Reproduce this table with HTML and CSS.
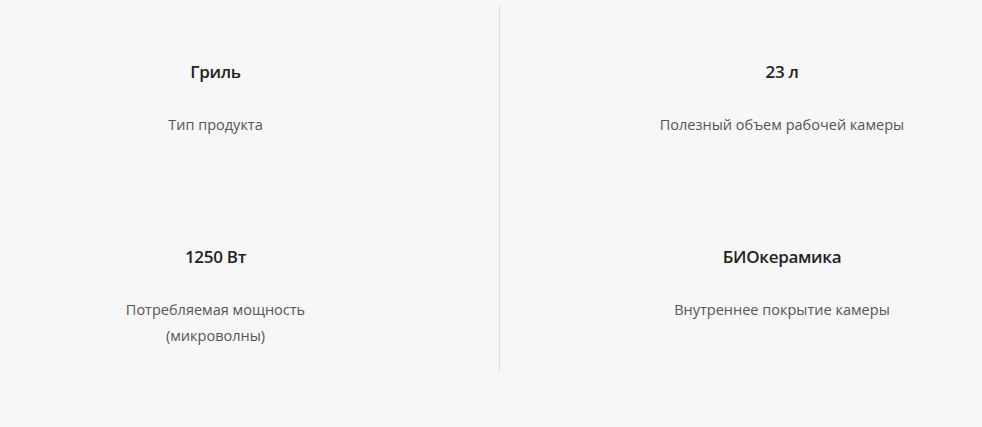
FILE: index.html
```html
<!DOCTYPE html>
<html lang="ru">
<head>
<meta charset="utf-8">
<link rel="stylesheet" href="styles.css">
</head>
<body>
<div class="specs">
  <div class="col col-left">
    <div class="item">
      <div class="title">Гриль</div>
      <div class="desc">Тип продукта</div>
    </div>
    <div class="item">
      <div class="title">1250 Вт</div>
      <div class="desc">Потребляемая мощность<br>(микроволны)</div>
    </div>
  </div>
  <div class="col col-right">
    <div class="item">
      <div class="title">23 л</div>
      <div class="desc">Полезный объем рабочей камеры</div>
    </div>
    <div class="item">
      <div class="title">БИОкерамика</div>
      <div class="desc">Внутреннее покрытие камеры</div>
    </div>
  </div>
</div>
</body>
</html>
```
FILE: styles.css
```css
html, body {
  margin: 0;
  padding: 0;
  background: #f7f7f7;
}
body {
  font-family: "Open Sans", "Noto Sans", sans-serif;
  width: 982px;
  height: 427px;
  overflow: hidden;
}
.specs {
  display: flex;
  align-items: flex-start;
  margin-top: 5px;
}
.col {
  display: flex;
  flex-direction: column;
  box-sizing: border-box;
  padding-top: 55px;
  height: 367px;
}
.col-left {
  width: 500px;
  padding-right: 68px;
  border-right: 1px solid #dcdcdc;
}
.col-right {
  width: 482px;
  padding-left: 100px;
  padding-right: 18px;
}
.item {
  flex-shrink: 0;
  height: 185px;
  text-align: center;
}
.item:last-child {
  height: auto;
}
.title {
  font-size: 17px;
  line-height: 24px;
  font-weight: 600;
  color: #222;
  letter-spacing: -0.3px;
}
.desc {
  margin-top: 28px;
  font-size: 14.5px;
  line-height: 26px;
  color: #555;
}
```
